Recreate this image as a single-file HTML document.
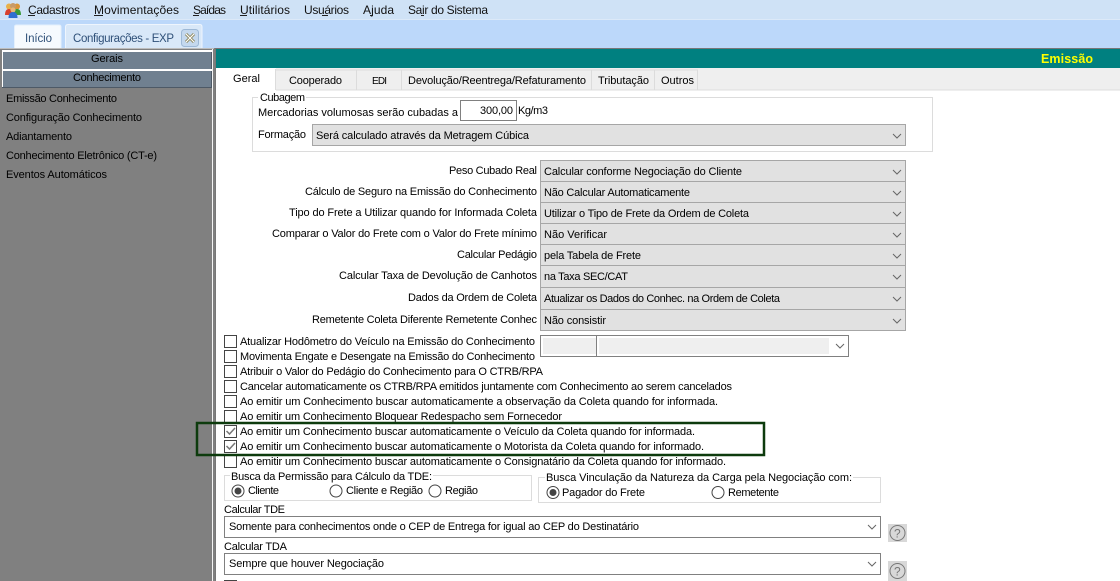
<!DOCTYPE html>
<html><head><meta charset="utf-8"><style>
html,body{margin:0;padding:0;background:#fff;width:1120px;height:581px;overflow:hidden}
svg{display:block}
text{font-family:"Liberation Sans",sans-serif;font-size:11px;fill:#000}
.m{font-size:12px;fill:#111}
.ch{fill:none;stroke:#666;stroke-width:1}
.cb{fill:#fff;stroke:#444;stroke-width:1}
.ck{fill:none;stroke:#777;stroke-width:1.5}
.s{fill:#e1e1e1;stroke:#a6a6a6;stroke-width:1}
.r{fill:#fff;stroke:#444;stroke-width:1}
.f{fill:none;stroke:#dcdcdc;stroke-width:1}
</style></head><body>
<svg width="1120" height="581" viewBox="0 0 1120 581" xmlns="http://www.w3.org/2000/svg">
<rect width="1120" height="19" fill="#cfe2f6"/>
<rect y="19" width="1120" height="29" fill="#bcd8fa"/>
<rect y="19" width="1120" height="1" fill="#dce9f8"/>
<!-- logo -->
<circle cx="9" cy="6.500" r="3" fill="#e8b04a"/><circle cx="17" cy="6.500" r="3" fill="#d89438"/>
<circle cx="13" cy="6" r="3" fill="#c89a68"/>
<path d="M5 15q0-6 4-6t4 6z" fill="#d8402c"/><path d="M13 15q0-6 4-6t4 6z" fill="#3a9a3a"/>
<circle cx="13" cy="10" r="2.500" fill="#e8b878"/>
<path d="M8.500 18q0-6 4.500-6t4.500 6z" fill="#2f6fd0"/>
<!-- menu -->
<text class="m" x="28" y="14" textLength="52">Cadastros</text><rect x="28" y="15" width="7" height="1" fill="#222"/>
<text class="m" x="94" y="14" textLength="85">Movimentações</text><rect x="94" y="15" width="9" height="1" fill="#222"/>
<text class="m" x="193" y="14" textLength="33">Saídas</text><rect x="193" y="15" width="6" height="1" fill="#222"/>
<text class="m" x="240" y="14" textLength="50">Utilitários</text><rect x="240" y="15" width="7" height="1" fill="#222"/>
<text class="m" x="304" y="14" textLength="45">Usuários</text><rect x="322" y="15" width="6" height="1" fill="#222"/>
<text class="m" x="363" y="14" textLength="31">Ajuda</text><rect x="370" y="15" width="3" height="1" fill="#222"/>
<text class="m" x="408" y="14" textLength="80">Sair do Sistema</text><rect x="421" y="15" width="3" height="1" fill="#222"/>
<!-- doc tabs -->
<path d="M14.500 48V27q0-2 2-2H59q2 0 2 2V48" fill="#f6fafe" stroke="#e4f0fc"/>
<path d="M65.500 48V27q0-2.500 2.500-2.500H200q2 0 2 2.500V48" fill="#d9e8f8" stroke="#eef5fd"/>
<text x="25" y="42" textLength="27" style="font-size:11.500px;fill:#2f5078">Início</text>
<text x="73" y="42" textLength="101" style="font-size:11.500px;fill:#2f5078">Configurações - EXP</text>
<rect x="181.500" y="29.500" width="17" height="17" rx="3" fill="#c4d8ee" stroke="#9db8d6"/>
<path d="M186 34l8 8M194 34l-8 8" stroke="#8a8458" stroke-width="3"/>
<path d="M186 34l8 8M194 34l-8 8" stroke="#fff" stroke-width="1.200"/>
<!-- left panel -->
<rect y="48" width="215" height="533" fill="#808080"/>
<rect y="48" width="214" height="1" fill="#bdbdbd"/>
<rect x="212" y="49" width="1" height="532" fill="#f4f4f4"/>
<rect x="2" y="50" width="210" height="19" fill="#fff"/>
<rect x="3" y="52" width="209" height="17" fill="#708090"/><rect x="211" y="52" width="1" height="17" fill="#4d5966"/>
<rect x="2" y="69" width="210" height="19" fill="#fff"/>
<rect x="3" y="71" width="209" height="17" fill="#708090"/><rect x="211" y="71" width="1" height="17" fill="#4d5966"/><rect x="2" y="87" width="210" height="1" fill="#4d5966"/>
<text x="91" y="62" textLength="32">Gerais</text>
<text x="73" y="81" textLength="68">Conhecimento</text>
<text x="6" y="102" textLength="111">Emissão Conhecimento</text>
<text x="6" y="121" textLength="136">Configuração Conhecimento</text>
<text x="6" y="140" textLength="66">Adiantamento</text>
<text x="6" y="159" textLength="151">Conhecimento Eletrônico (CT-e)</text>
<text x="6" y="178" textLength="101">Eventos Automáticos</text>
<!-- main -->
<rect x="215" y="48" width="905" height="533" fill="#fff"/>
<rect x="215" y="48" width="905" height="1" fill="#777"/>
<rect x="215" y="49" width="905" height="19" fill="#008080"/>
<rect x="215" y="49" width="1" height="532" fill="#777"/>
<text x="1041" y="63" textLength="52" style="font-size:12.500px;font-weight:bold;fill:#ffff00">Emissão</text>
<rect x="216" y="68" width="904" height="22" fill="#efefef"/>
<rect x="216" y="89.500" width="904" height="1" fill="#dcdcdc"/>
<rect x="216" y="68" width="60" height="23" fill="#fff"/>
<path d="M275.500 69V90M356.500 70V90M401.500 70V90M591.500 70V90M654.500 70V90M697.500 70V90M275 70H698" stroke="#dcdcdc" fill="none"/>
<text x="233" y="82" textLength="27">Geral</text>
<text x="289" y="84" textLength="53">Cooperado</text>
<text x="372" y="84" textLength="15" style="font-size:10px">EDI</text>
<text x="408" y="84" textLength="178">Devolução/Reentrega/Refaturamento</text>
<text x="598" y="84" textLength="51">Tributação</text>
<text x="661" y="84" textLength="33">Outros</text>
<!-- cubagem -->
<path class="f" d="M258 97.500H252.500V151.500H932.500V97.500H306"/>
<text x="260" y="101" textLength="45">Cubagem</text>
<text x="258" y="116" textLength="200">Mercadorias volumosas serão cubadas a</text>
<rect x="460.500" y="100.500" width="56" height="20" fill="#fff" stroke="#808080"/>
<text x="480" y="114" textLength="33">300,00</text>
<text x="518" y="114" textLength="30">Kg/m3</text>
<text x="258" y="138" textLength="48">Formação</text>
<rect class="s" x="312.500" y="124.500" width="593" height="21"/>
<text x="316" y="139" textLength="213">Será calculado através da Metragem Cúbica</text>
<path class="ch" d="M893 134l4 4 4-4"/>
<!-- selects -->
<rect class="s" x="540.500" y="160.500" width="365" height="21"/><rect class="s" x="540.500" y="181.500" width="365" height="21"/><rect class="s" x="540.500" y="202.500" width="365" height="21"/><rect class="s" x="540.500" y="223.500" width="365" height="21"/><rect class="s" x="540.500" y="244.500" width="365" height="21"/><rect class="s" x="540.500" y="265.500" width="365" height="22"/><rect class="s" x="540.500" y="287.500" width="365" height="22"/><rect class="s" x="540.500" y="309.500" width="365" height="21"/>
<path class="ch" d="M893 170l4 4 4-4M893 191l4 4 4-4M893 212l4 4 4-4M893 233l4 4 4-4M893 254l4 4 4-4M893 275l4 4 4-4M893 297l4 4 4-4M893 319l4 4 4-4"/>
<text x="449" y="174" textLength="88">Peso Cubado Real</text>
<text x="305" y="195" textLength="232">Cálculo de Seguro na Emissão do Conhecimento</text>
<text x="289" y="216" textLength="248">Tipo do Frete a Utilizar quando for Informada Coleta</text>
<text x="272" y="237" textLength="265">Comparar o Valor do Frete com o Valor do Frete mínimo</text>
<text x="457" y="258" textLength="80">Calcular Pedágio</text>
<text x="339" y="279" textLength="198">Calcular Taxa de Devolução de Canhotos</text>
<text x="408" y="301" textLength="129">Dados da Ordem de Coleta</text>
<text x="312" y="323" textLength="225">Remetente Coleta Diferente Remetente Conhec</text>
<text x="544" y="175" textLength="198">Calcular conforme Negociação do Cliente</text>
<text x="544" y="196" textLength="146">Não Calcular Automaticamente</text>
<text x="544" y="217" textLength="205">Utilizar o Tipo de Frete da Ordem de Coleta</text>
<text x="544" y="238" textLength="63">Não Verificar</text>
<text x="544" y="259" textLength="97">pela Tabela de Frete</text>
<text x="544" y="280" textLength="84">na Taxa SEC/CAT</text>
<text x="544" y="302" textLength="236">Atualizar os Dados do Conhec. na Ordem de Coleta</text>
<text x="544" y="324" textLength="62">Não consistir</text>
<!-- combo -->
<rect x="540.500" y="335.500" width="308" height="21" fill="#fff" stroke="#808080"/>
<rect x="543" y="338" width="53" height="16" fill="#efefef"/>
<rect x="596" y="336" width="1" height="20" fill="#808080"/>
<rect x="599" y="338" width="230" height="16" fill="#efefef"/>
<path class="ch" d="M836 344l4 4 4-4"/>
<!-- checkboxes -->
<rect class="cb" x="224.500" y="335.500" width="12" height="12"/><rect class="cb" x="224.500" y="350.500" width="12" height="12"/><rect class="cb" x="224.500" y="365.500" width="12" height="12"/><rect class="cb" x="224.500" y="380.500" width="12" height="12"/><rect class="cb" x="224.500" y="395.500" width="12" height="12"/><rect class="cb" x="224.500" y="410.500" width="12" height="12"/><rect class="cb" x="224.500" y="425.500" width="12" height="12"/><rect class="cb" x="224.500" y="440.500" width="12" height="12"/><rect class="cb" x="224.500" y="455.500" width="12" height="12"/>
<path class="ck" d="M226.500 431l3 3 5.500-6M226.500 446l3 3 5.500-6"/>
<text x="240" y="345" textLength="295">Atualizar Hodômetro do Veículo na Emissão do Conhecimento</text>
<text x="240" y="360" textLength="295">Movimenta Engate e Desengate na Emissão do Conhecimento</text>
<text x="240" y="375" textLength="303">Atribuir o Valor do Pedágio do Conhecimento para O CTRB/RPA</text>
<text x="240" y="390" textLength="492">Cancelar automaticamente os CTRB/RPA emitidos juntamente com Conhecimento ao serem cancelados</text>
<text x="240" y="405" textLength="478">Ao emitir um Conhecimento buscar automaticamente a observação da Coleta quando for informada.</text>
<text x="240" y="420" textLength="322">Ao emitir um Conhecimento Bloquear Redespacho sem Fornecedor</text>
<text x="240" y="435" textLength="455">Ao emitir um Conhecimento buscar automaticamente o Veículo da Coleta quando for informada.</text>
<text x="240" y="450" textLength="464">Ao emitir um Conhecimento buscar automaticamente o Motorista da Coleta quando for informado.</text>
<text x="240" y="465" textLength="486">Ao emitir um Conhecimento buscar automaticamente o Consignatário da Coleta quando for informado.</text>
<rect x="197" y="423" width="567" height="32" fill="none" stroke="#0d3b0d" stroke-width="2.500"/>
<!-- radio groups -->
<path class="f" d="M230 475.500H224.500V500.500H531.500V475.500H433"/>
<text x="231" y="480" textLength="201">Busca da Permissão para Cálculo da TDE:</text>
<circle class="r" cx="238" cy="491" r="6"/><circle cx="238" cy="491" r="3.500" fill="#444"/>
<text x="248" y="494" textLength="31">Cliente</text>
<circle class="r" cx="336" cy="491" r="6"/><text x="346" y="494" textLength="77">Cliente e Região</text>
<circle class="r" cx="435" cy="491" r="6"/><text x="445" y="494" textLength="33">Região</text>
<path class="f" d="M545 477.500H538.500V502.500H880.500V477.500H853"/>
<text x="546" y="481" textLength="306">Busca Vinculação da Natureza da Carga pela Negociação com:</text>
<circle class="r" cx="553" cy="492.500" r="6"/><circle cx="553" cy="492.500" r="3.500" fill="#444"/>
<text x="562" y="496" textLength="83">Pagador do Frete</text>
<circle class="r" cx="718" cy="492.500" r="6"/><text x="728" y="496" textLength="51">Remetente</text>
<!-- bottom selects -->
<text x="224" y="513" textLength="61">Calcular TDE</text>
<rect x="224.500" y="516.500" width="656" height="21" fill="#fff" stroke="#808080"/>
<text x="229" y="530" textLength="410">Somente para conhecimentos onde o CEP de Entrega for igual ao CEP do Destinatário</text>
<path class="ch" d="M868 525l4 4 4-4"/>
<text x="224" y="550" textLength="63">Calcular TDA</text>
<rect x="224.500" y="553.500" width="656" height="21" fill="#fff" stroke="#808080"/>
<text x="229" y="567" textLength="155">Sempre que houver Negociação</text>
<path class="ch" d="M868 562l4 4 4-4"/>
<rect x="888" y="524" width="19" height="18" fill="#d8d8d8"/>
<circle cx="897.500" cy="533" r="7.500" fill="none" stroke="#777"/>
<text x="894" y="537.500" style="font-size:12px;fill:#777">?</text>
<rect x="888" y="561" width="19" height="20" fill="#d8d8d8"/>
<circle cx="897.500" cy="571" r="7.500" fill="none" stroke="#777"/>
<text x="894" y="575.500" style="font-size:12px;fill:#777">?</text>
<rect class="cb" x="224.500" y="580.500" width="12" height="12"/>
</svg>
</body></html>
